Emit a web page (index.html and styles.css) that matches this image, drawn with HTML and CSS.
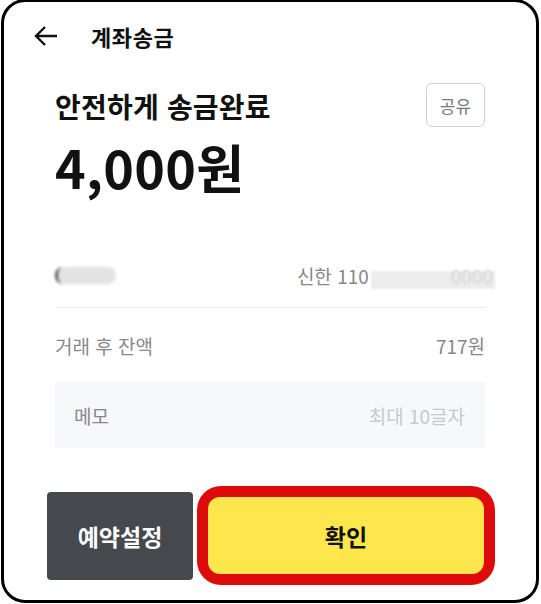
FILE: index.html
```html
<!DOCTYPE html>
<html lang="ko">
<head>
    <meta charset="UTF-8">
    <meta name="viewport" content="width=device-width, initial-scale=1.0">
    <title>계좌송금</title>
    <link rel="stylesheet" href="styles.css">
</head>
<body>
    <div class="frame">
        <header class="topbar">
            <svg class="back" width="26" height="22" viewBox="0 0 26 22">
                <path d="M24 11H3M12 2L3 11l9 9" fill="none" stroke="#111" stroke-width="2.4"/>
            </svg>
            <h1>계좌송금</h1>
        </header>

        <section class="done">
            <div class="done-text">
                <h2>안전하게 송금완료</h2>
                <div class="amount">4,000원</div>
            </div>
            <button class="share">공유</button>
        </section>

        <div class="row first">
            <span class="name-blur"></span>
            <span class="account">신한 110<span class="num-blur">0000</span></span>
        </div>
        <div class="row">
            <span class="label">거래 후 잔액</span>
            <span class="value">717원</span>
        </div>
        <div class="memo">
            <span>메모</span>
            <span class="hint">최대 10글자</span>
        </div>

        <div class="actions">
            <button class="reserve">예약설정</button>
            <div class="confirm-wrap">
                <button class="confirm">확인</button>
            </div>
        </div>
    </div>
</body>
</html>
```

FILE: styles.css
```css
body {
    margin: 0;
    background-color: #fff;
    font-family: "Noto Sans CJK KR", "Noto Sans", sans-serif;
    color: #111;
}
.frame {
    box-sizing: border-box;
    height: 604px;
    margin: -1px 2px 0 1px;
    border: 3px solid #000;
    border-radius: 24px;
    padding: 0 51px 0 51px;
}
.topbar {
    display: flex;
    align-items: center;
    height: 68px;
    margin-left: -22px;
}
.back {
    margin-right: 32px;
}
.topbar h1 {
    margin: 0;
    font-size: 22px;
    font-weight: 700;
    letter-spacing: 0.6px;
}
.done {
    display: flex;
    justify-content: space-between;
    align-items: flex-start;
    margin-top: 18px;
}
.done h2 {
    margin: 0;
    font-size: 28px;
    font-weight: 700;
    line-height: 36px;
    letter-spacing: 0.2px;
}
.amount {
    margin-top: 13px;
    font-size: 52px;
    font-weight: 700;
    line-height: 60px;
    letter-spacing: 0.3px;
}
.share {
    width: 59px;
    height: 44px;
    margin-top: -5px;
    background-color: #fff;
    border: 1px solid #cfcfcf;
    border-radius: 6px;
    color: #777;
    font-family: inherit;
    font-size: 17px;
}
.row {
    display: flex;
    justify-content: space-between;
    align-items: center;
    height: 74px;
    font-size: 19px;
    color: #888;
}
.row.first {
    margin-top: 46px;
    height: 64px;
    border-bottom: 1px solid #ececec;
}
.name-blur {
    display: block;
    width: 58px;
    height: 17px;
    border-radius: 8px;
    background-color: #e3e3e3;
    border-left: 3px solid #555;
    filter: blur(1.5px);
}
.account {
    display: flex;
    align-items: center;
    margin-right: -10px;
}
.num-blur {
    margin-left: 2px;
    padding: 0 2px 0 80px;
    color: #d4d4d4;
    background: linear-gradient(#fff 0, #fff 35%, #ececec 35%);
    filter: blur(1px);
}
.memo {
    display: flex;
    justify-content: space-between;
    align-items: center;
    height: 66px;
    padding: 0 20px 0 19px;
    background-color: #f7f8fa;
    font-size: 19px;
    color: #888;
}
.memo .hint {
    color: #c8c8c8;
}
.actions {
    display: flex;
    align-items: center;
    gap: 4px;
    margin: 38px -10px 0 -8px;
}
.reserve {
    width: 146px;
    height: 88px;
    flex: none;
    background-color: #45484d;
    border: none;
    border-radius: 4px;
    color: #fff;
    font-family: inherit;
    font-size: 23px;
    font-weight: 700;
}
.confirm-wrap {
    flex: 1;
    padding: 11px;
    background-color: #dd0b0b;
    border-radius: 24px;
}
.confirm {
    display: block;
    width: 100%;
    height: 77px;
    background-color: #fde74c;
    border: none;
    border-radius: 12px;
    color: #111;
    font-family: inherit;
    font-size: 23px;
    font-weight: 700;
}
```
